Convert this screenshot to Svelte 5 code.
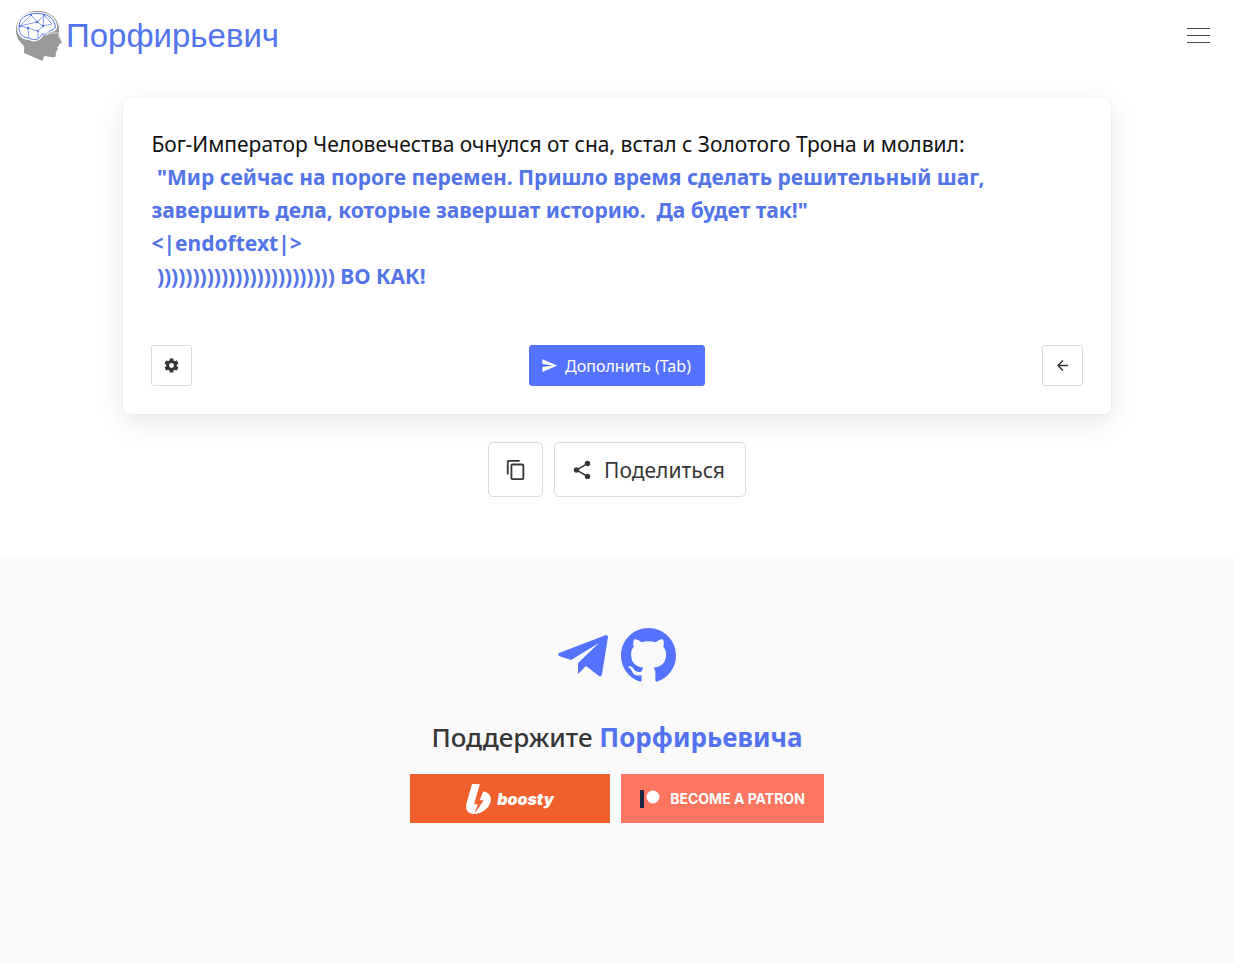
<script>
    let menuOpen = false;
    let prompt = "Бог-Император Человечества очнулся от сна, встал с Золотого Трона и молвил:";
    let reply = [
        ' "Мир сейчас на пороге перемен. Пришло время сделать решительный шаг, завершить дела, которые завершат историю.  Да будет так!"',
        "<|endoftext|>",
        " " + ")".repeat(25) + " ВО КАК!",
    ].join("\n");

    function toggleMenu() {
        menuOpen = !menuOpen;
    }
</script>

<header class="navbar">
    <a class="brand" href="/">
        <svg class="brand-icon" viewBox="0 0 46 50" aria-hidden="true">
            <path
                d="M22 0C9 0 0 8 0 19c0 7 3 11 7 15 2 2 1 5 1 8l18.500 8 1.500-5c4 0 8 2 11 1 2-1 0-3 1-5l2-3-1-2 2-1v-2l3-1-3-7V16C41 6 33 0 22 0z"
                fill="#999"
            />
            <path
                d="M21 2C9 2 2 8 2 16c0 7 4 12 11 12 5 3 11 1 14-5 5 1 6-2 8-3 4 0 6-3 5-6C38 6 31 2 21 2z"
                fill="#fff"
                stroke="#fff"
                stroke-width="2"
            />
            <path
                d="M21 2.500C9 2.500 3 8 3 16c0 7 4 11 10 11 5 3 10 2 13-4 5 1 6-2 9-4 3 0 5-2 4-5C37 6 31 2.500 21 2.500z"
                fill="#fff"
                stroke="#5c78e8"
                stroke-width="1"
            />
            <path
                d="M15 4l6 7 8-7M15 4L4 15l17-4 6 4 1-11 8 9-9 2-5 5-10-3-8-2M12 17l1 10M22 20v7"
                fill="none"
                stroke="#6b84ec"
                stroke-width=".8"
            />
            <g fill="#4769df">
                <circle cx="15" cy="4" r="1" />
                <circle cx="28" cy="4" r="1" />
                <circle cx="21" cy="11" r="1.300" />
                <circle cx="4" cy="15" r="1" />
                <circle cx="12" cy="17" r="1.200" />
                <circle cx="27" cy="15" r="1.200" />
                <circle cx="22" cy="20" r="1" />
            </g>
            <path d="M30 22h13v5" fill="none" stroke="#ddd" stroke-width="1" />
        </svg>
        <span>Порфирьевич</span>
    </a>
    <button
        class="burger"
        aria-label="Меню"
        aria-expanded={menuOpen}
        onclick={toggleMenu}
    >
        <i></i><i></i><i></i>
    </button>
</header>

<main>
    <section class="card">
        <p class="story">{prompt}<br /><b>{reply}</b></p>

        <div class="controls">
            <button class="btn square" aria-label="Настройки">
                <svg viewBox="0 0 24 24" width="17" height="17" fill="currentColor">
                    <path
                        d="M12 15.500A3.500 3.500 0 0 1 8.500 12 3.500 3.500 0 0 1 12 8.500a3.500 3.500 0 0 1 3.500 3.500 3.500 3.500 0 0 1-3.500 3.500m7.430-2.530c.04-.32.07-.64.07-.97s-.03-.66-.07-1l2.110-1.630c.19-.15.24-.42.12-.64l-2-3.460c-.12-.22-.39-.31-.61-.22l-2.490 1c-.52-.39-1.060-.73-1.690-.98l-.37-2.650A.506.506 0 0 0 14 2h-4c-.25 0-.46.18-.5.42l-.37 2.650c-.63.25-1.170.59-1.690.98l-2.490-1c-.22-.09-.49 0-.61.22l-2 3.460c-.13.22-.07.49.12.64L4.570 11c-.04.34-.07.67-.07 1s.03.65.07.97l-2.110 1.660c-.19.15-.25.42-.12.64l2 3.460c.12.22.39.3.61.22l2.490-1.010c.52.4 1.060.74 1.690.99l.37 2.650c.04.24.25.42.5.42h4c.25 0 .46-.18.5-.42l.37-2.650c.63-.26 1.170-.59 1.690-.99l2.490 1.010c.22.08.49 0 .61-.22l2-3.460c.12-.22.07-.49-.12-.64z"
                    />
                </svg>
            </button>
            <button class="btn primary">
                <svg viewBox="0 0 24 24" width="17" height="17" fill="currentColor">
                    <path d="M2 21l21-9L2 3v7l15 2-15 2z" />
                </svg>
                Дополнить (Tab)
            </button>
            <button class="btn square" aria-label="Назад">
                <svg viewBox="0 0 24 24" width="17" height="17" fill="currentColor">
                    <path d="M20 11v2H8l5.500 5.500-1.420 1.420L4.160 12l7.920-7.920L13.500 5.500 8 11z" />
                </svg>
            </button>
        </div>
    </section>

    <div class="share">
        <button class="btn large copy" aria-label="Скопировать">
            <svg viewBox="0 0 24 24" width="22" height="22" fill="currentColor">
                <path
                    d="M19 21H8V7h11m0-2H8a2 2 0 0 0-2 2v14a2 2 0 0 0 2 2h11a2 2 0 0 0 2-2V7a2 2 0 0 0-2-2m-3-4H4a2 2 0 0 0-2 2v14h2V3h12z"
                />
            </svg>
        </button>
        <button class="btn large">
            <svg viewBox="0 0 24 24" width="22" height="22" fill="currentColor">
                <path
                    d="M18 16.080c-.76 0-1.440.3-1.960.77L8.910 12.700c.05-.23.09-.46.09-.7s-.04-.47-.09-.7l7.050-4.110c.54.5 1.250.81 2.040.81a3 3 0 1 0-3-3c0 .24.04.47.09.7L8.040 9.810A3 3 0 0 0 6 9a3 3 0 1 0 0 6c.79 0 1.500-.31 2.040-.81l7.120 4.150c-.05.21-.08.43-.08.66A2.920 2.920 0 1 0 18 16.080z"
                />
            </svg>
            Поделиться
        </button>
    </div>
</main>

<footer>
    <div class="social">
        <a href="https://t.me/" aria-label="Telegram">
            <svg viewBox="0 0 50 42" width="50" height="42" fill="currentColor">
                <path
                    d="M48 0L1 18c-1 1-1 2 0 3l12 4 28-17-21 20v11l8-8 13 10c1 1 3 0 3-2L50 2c0-1-1-2-2-2z"
                />
            </svg>
        </a>
        <a href="https://github.com/" aria-label="GitHub">
            <svg viewBox="0 0 16 16" width="55" height="55" fill="currentColor">
                <path
                    d="M8 0C3.580 0 0 3.580 0 8c0 3.540 2.290 6.530 5.470 7.590.4.07.55-.17.55-.38 0-.19-.01-.82-.01-1.490-2.010.37-2.530-.49-2.690-.94-.09-.23-.48-.94-.82-1.130-.28-.15-.68-.52-.01-.53.63-.01 1.080.58 1.230.82.72 1.210 1.870.87 2.330.66.07-.52.28-.87.51-1.070-1.780-.2-3.640-.89-3.640-3.950 0-.87.31-1.590.82-2.150-.08-.2-.36-1.020.08-2.120 0 0 .67-.21 2.200.82.64-.18 1.320-.27 2-.27s1.360.09 2 .27c1.530-1.040 2.200-.82 2.200-.82.44 1.100.16 1.920.08 2.120.51.56.82 1.270.82 2.150 0 3.070-1.870 3.750-3.650 3.950.29.25.54.73.54 1.480 0 1.070-.01 1.930-.01 2.200 0 .21.15.46.55.38A8.010 8.010 0 0 0 16 8c0-4.420-3.580-8-8-8z"
                />
            </svg>
        </a>
    </div>

    <h2>Поддержите <b>Порфирьевича</b></h2>

    <div class="donate">
        <a class="boosty" href="https://boosty.to/">
            <svg viewBox="40 51 156 190" width="25" height="30" fill="#fff" aria-hidden="true">
                <path
                    d="M44.300 164.500L76.900 51.600H127l-10.100 35-.3.6L90 179.600h24.800l-24.300 60.900c-45.800-.5-58.600-33.300-47.400-72.100M90.700 240.600l60.400-86.900h-25.600l22.300-55.700c38.200 4 56.200 34.100 45.600 70.500-11.300 39.100-57.100 72.100-101.700 72.100z"
                />
            </svg>
            <span>boosty</span>
        </a>
        <a class="patreon" href="https://www.patreon.com/">
            <svg viewBox="0 0 20 18" width="20" height="18" aria-hidden="true">
                <path d="M0 0h4v18H0z" fill="#1b2440" />
                <circle cx="13" cy="7" r="6.500" fill="#fff" />
            </svg>
            <span>BECOME A PATRON</span>
        </a>
    </div>
</footer>

<style>
    :global(body) {
        margin: 0;
        background: #fff;
    }

    :global(#app) {
        display: flex;
        flex-direction: column;
        min-height: 100vh;
        font-family: "Segoe UI", "Noto Sans", sans-serif;
        color: #363636;
    }

    .navbar {
        display: flex;
        justify-content: space-between;
        align-items: center;
        height: 72px;
        padding: 0 24px 0 16px;
    }

    .brand {
        display: flex;
        align-items: center;
        gap: 4px;
        color: #5274f0;
        font: 33px/40px "Liberation Sans", Arial, sans-serif;
        text-decoration: none;
    }

    .brand-icon {
        width: 46px;
        height: 50px;
    }

    .burger {
        display: flex;
        flex-direction: column;
        gap: 6px;
        padding: 0 0 2px;
        border: none;
        background: none;
        cursor: pointer;
    }

    .burger i {
        width: 23px;
        height: 1px;
        background: #4a4a4a;
    }

    .card {
        width: 80%;
        margin: 26px auto 0;
        padding: 30px 28px 28px;
        box-sizing: border-box;
        border-radius: 8px;
        background: #fff;
        box-shadow:
            0 8px 28px rgba(10, 10, 10, 0.1),
            0 0 0 1px rgba(10, 10, 10, 0.02);
    }

    .story {
        margin: 0 0 52px;
        color: #111;
        font-size: 21px;
        line-height: 33px;
        white-space: pre-wrap;
    }

    .story b {
        color: #5274e8;
        font-weight: 700;
    }

    .controls {
        display: flex;
        justify-content: space-between;
    }

    .btn {
        display: flex;
        align-items: center;
        justify-content: center;
        height: 41px;
        padding: 0 13px 0 11px;
        box-sizing: border-box;
        border: 1px solid #dbdbdb;
        border-radius: 3px;
        background: #fff;
        color: #363636;
        font-family: inherit;
        font-size: 16px;
        cursor: pointer;
    }

    .square {
        width: 41px;
        padding: 0;
    }

    .primary {
        gap: 7px;
        border-color: #5472ff;
        background: #5472ff;
        color: #fff;
    }

    .share {
        display: flex;
        justify-content: center;
        gap: 11px;
        margin: 28px 0 60px;
    }

    .large {
        gap: 11px;
        height: 55px;
        padding: 0 20px 0 16px;
        border-radius: 5px;
        font-size: 21px;
    }

    .copy {
        width: 55px;
        padding: 0;
    }

    footer {
        flex: 1;
        padding: 71px 24px 48px;
        background: #fafafa;
    }

    .social {
        display: flex;
        justify-content: center;
        align-items: center;
        gap: 13px;
    }

    .social a {
        display: flex;
        color: #5472ff;
    }

    h2 {
        margin: 36px 0 18px;
        font-size: 26px;
        font-weight: 500;
        line-height: 37px;
        text-align: center;
    }

    h2 b {
        color: #5472f0;
        font-weight: 700;
    }

    .donate {
        display: flex;
        justify-content: center;
        gap: 11px;
    }

    .donate a {
        display: flex;
        align-items: center;
        justify-content: center;
        height: 49px;
        color: #fff;
        font-family: Inter, sans-serif;
        text-decoration: none;
    }

    .boosty {
        gap: 6px;
        width: 200px;
        background: #f15f2c;
    }

    .boosty span {
        font-size: 16px;
        font-style: italic;
        font-weight: 900;
    }

    .patreon {
        gap: 10px;
        width: 203px;
        background: #ff7660;
    }

    .patreon span {
        font-size: 14px;
        font-weight: 700;
    }
</style>
